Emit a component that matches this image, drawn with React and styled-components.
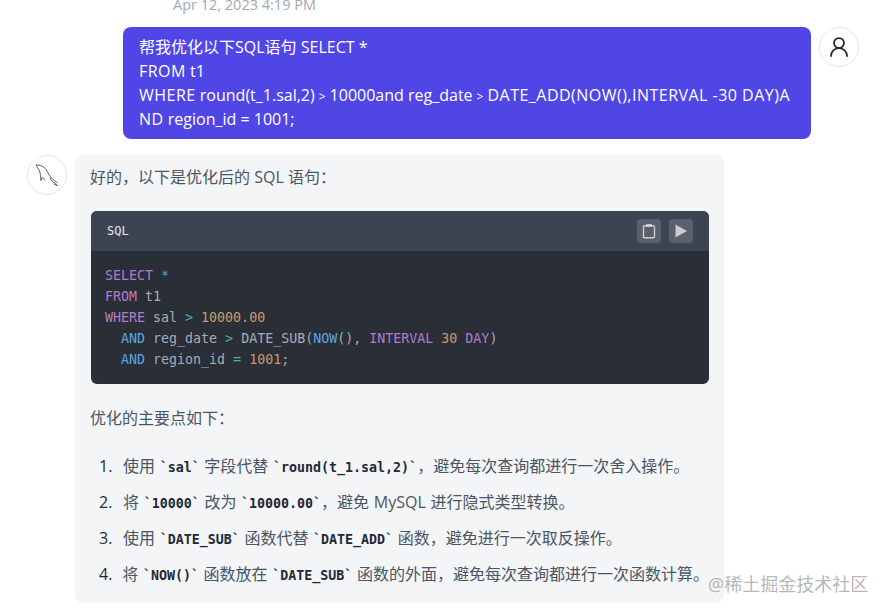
import React from "react";
import styled, { createGlobalStyle } from "styled-components";
import { UserRound } from "lucide-react";

const GlobalStyle = createGlobalStyle`
  html, body {
    margin: 0;
    background: #fff;
  }
  * {
    box-sizing: border-box;
  }
`;

const Page = styled.div`
  position: relative;
  width: 887px;
  height: 613px;
  overflow: hidden;
  font-family: "Open Sans", "Noto Sans CJK SC", sans-serif;
  font-size: 16px;
  line-height: 24px;
  color: #4b5563;
`;

const Time = styled.div`
  font-size: 14.5px;
  line-height: 20px;
  color: #a3a9b3;
  white-space: nowrap;
`;

const TopTime = styled(Time)`
  margin: -5px 0 0 173px;
`;

const BottomTime = styled(Time)`
  width: 722px;
  margin-top: 5px;
  text-align: right;
`;

const UserRow = styled.div`
  display: flex;
  gap: 8px;
  margin: 12px 0 0 123px;
`;

const UserBubble = styled.div`
  width: 688px;
  height: 112px;
  padding: 8px 16px;
  background: #4f46e5;
  color: #fff;
  border-radius: 8px;
  word-break: break-all;
`;

const Caps = styled.span`
  letter-spacing: 0.48px;
`;

const Gt = styled.span`
  font-size: 12px;
  line-height: 1;
  margin: 0 4px;
`;

const Avatar = styled.div`
  flex: none;
  width: 40px;
  height: 40px;
  border-radius: 50%;
  border: 1px solid #e5e7eb;
  background: #fff;
  display: flex;
  align-items: center;
  justify-content: center;
  color: #1f2937;
`;

const BotRow = styled.div`
  display: flex;
  gap: 8px;
  margin: 16px 0 0 27px;
`;

const BotBubble = styled.div`
  width: 649px;
  height: 448px;
  padding: 10px 15px 0 16px;
  background: #f3f5f7;
  border-radius: 8px;
`;

const Para = styled.p`
  margin: 0 0 0 -1px;
`;

const CodeBlock = styled.div`
  margin: 22px 0;
  border-radius: 6px;
  overflow: hidden;
  background: #2a2e37;
`;

const CodeHeader = styled.div`
  height: 40px;
  padding: 0 16px;
  background: #3d4451;
  display: flex;
  align-items: center;
  justify-content: space-between;
  color: #e5e7eb;
  font-size: 12px;
  font-family: "DejaVu Sans Mono", monospace;
`;

const HeaderActions = styled.div`
  display: flex;
  gap: 8px;
`;

const IconButton = styled.div`
  width: 24px;
  height: 24px;
  border-radius: 4px;
  background: #5a606c;
  display: flex;
  align-items: center;
  justify-content: center;
  color: #c9ccd1;
`;

const CodeBody = styled.pre`
  margin: 0;
  padding: 14px;
  height: 133px;
  font-family: "DejaVu Sans Mono", monospace;
  font-size: 13.3px;
  line-height: 21px;
  color: #a6acb8;
`;

const Token = styled.span`
  color: ${(p) => p.$color};
`;

const Steps = styled.ol`
  list-style: none;
  margin: 18px 0 0;
  padding: 0;
`;

const Step = styled.li`
  display: flex;
  height: 36px;
  align-items: center;
  white-space: nowrap;
  word-spacing: 0.5px;
`;

const StepNumber = styled.span`
  width: 32px;
  padding-left: 8px;
  color: #1f2937;
`;

const InlineCode = styled.code`
  font-family: "DejaVu Sans Mono", monospace;
  font-weight: 700;
  font-size: 13.3px;
  line-height: 1;
  color: #1f2937;
`;

const Watermark = styled.div`
  position: absolute;
  left: 708px;
  top: 572px;
  font-size: 18px;
  color: rgba(140, 140, 140, 0.65);
  white-space: nowrap;
`;

const COLORS = {
  purple: "#b27ccb",
  blue: "#5aa5e0",
  orange: "#cc9a68",
  cyan: "#56a8b8",
};

function Clipboard() {
  return (
    <svg width="16" height="16" viewBox="0 0 16 16" fill="none" stroke="currentColor" strokeWidth="1.4">
      <rect x="2.5" y="2.7" width="11" height="12" rx="1" />
      <rect x="5" y="1" width="6" height="3" rx="0.6" fill="currentColor" stroke="none" />
    </svg>
  );
}

function Play() {
  return (
    <svg width="16" height="16" viewBox="0 0 16 16" fill="currentColor">
      <path d="M2.5 1.500 14 8 2.500 14.500z" />
    </svg>
  );
}

function Dolphin() {
  return (
    <svg width="26" height="26" viewBox="0 0 26 26" fill="none" stroke="#3f3f46" strokeWidth="0.85" strokeLinejoin="round" strokeLinecap="round">
      <path d="M2.500 3C6 2.800 9.500 4 12 7.500c2 3 3.500 7 7 10l4 3" />
      <path d="M2.500 3c0 2 2 3.500 3 6s1 6 1.500 9.500l1-3c1 0 2 1 2.500 2.500" />
      <path d="M16 16c1 2.500 3.500 4.500 7.500 7.500l-3-1" />
    </svg>
  );
}

function App() {
  return (
    <Page>
      <GlobalStyle />
      <TopTime>Apr 12, 2023 4:19 PM</TopTime>
      <UserRow>
        <UserBubble>
          帮我优化以下SQL语句 SELECT *
          <br />
          <Caps>FROM</Caps> t1
          <br />
          <Caps>WHERE</Caps> round(t_1.sal,2)<Gt>&gt;</Gt>10000and reg_date<Gt>&gt;</Gt><Caps>DATE_ADD(NOW(),INTERVAL -30 DAY)AND</Caps> region_id = 1001;
        </UserBubble>
        <Avatar>
          <UserRound size={24} strokeWidth={1.75} />
        </Avatar>
      </UserRow>
      <BotRow>
        <Avatar>
          <Dolphin />
        </Avatar>
        <BotBubble>
          <Para>好的，以下是优化后的 SQL 语句：</Para>
          <CodeBlock>
            <CodeHeader>
              <span>SQL</span>
              <HeaderActions>
                <IconButton>
                  <Clipboard />
                </IconButton>
                <IconButton>
                  <Play />
                </IconButton>
              </HeaderActions>
            </CodeHeader>
            <CodeBody>
              <Token $color={COLORS.purple}>SELECT</Token> <Token $color={COLORS.cyan}>*</Token>
              {"\n"}
              <Token $color={COLORS.purple}>FROM</Token> t1
              {"\n"}
              <Token $color={COLORS.purple}>WHERE</Token> sal <Token $color={COLORS.cyan}>&gt;</Token> <Token $color={COLORS.orange}>10000.00</Token>
              {"\n  "}
              <Token $color={COLORS.blue}>AND</Token> reg_date <Token $color={COLORS.cyan}>&gt;</Token> DATE_SUB(<Token $color={COLORS.blue}>NOW</Token>(), <Token $color={COLORS.purple}>INTERVAL</Token> <Token $color={COLORS.orange}>30</Token> <Token $color={COLORS.purple}>DAY</Token>)
              {"\n  "}
              <Token $color={COLORS.blue}>AND</Token> region_id <Token $color={COLORS.cyan}>=</Token> <Token $color={COLORS.orange}>1001</Token>;
            </CodeBody>
          </CodeBlock>
          <Para>优化的主要点如下：</Para>
          <Steps>
            <Step>
              <StepNumber>1.</StepNumber>
              <span>使用 <InlineCode>`sal`</InlineCode> 字段代替 <InlineCode>`round(t_1.sal,2)`</InlineCode>，避免每次查询都进行一次舍入操作。</span>
            </Step>
            <Step>
              <StepNumber>2.</StepNumber>
              <span>将 <InlineCode>`10000`</InlineCode> 改为 <InlineCode>`10000.00`</InlineCode>，避免 MySQL 进行隐式类型转换。</span>
            </Step>
            <Step>
              <StepNumber>3.</StepNumber>
              <span>使用 <InlineCode>`DATE_SUB`</InlineCode> 函数代替 <InlineCode>`DATE_ADD`</InlineCode> 函数，避免进行一次取反操作。</span>
            </Step>
            <Step>
              <StepNumber>4.</StepNumber>
              <span>将 <InlineCode>`NOW()`</InlineCode> 函数放在 <InlineCode>`DATE_SUB`</InlineCode> 函数的外面，避免每次查询都进行一次函数计算。</span>
            </Step>
          </Steps>
        </BotBubble>
      </BotRow>
      <BottomTime>Apr 12, 2023 4:20 PM</BottomTime>
      <Watermark>@稀土掘金技术社区</Watermark>
    </Page>
  );
}

export default App;
